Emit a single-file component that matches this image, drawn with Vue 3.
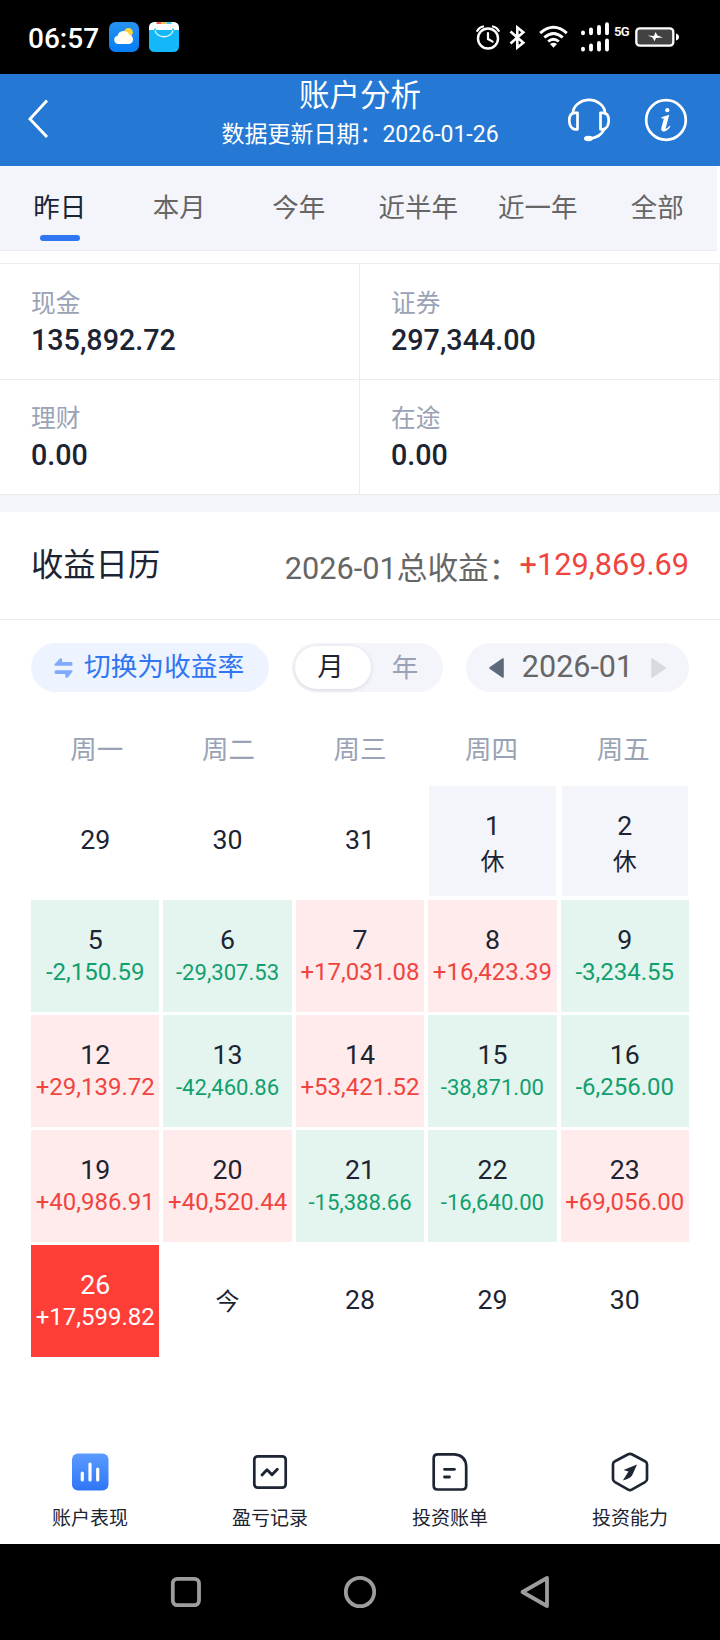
<script setup>
const tabs = ['昨日', '本月', '今年', '近半年', '近一年', '全部']
const assets = [
  { label: '现金', value: '135,892.72' },
  { label: '证券', value: '297,344.00' },
  { label: '理财', value: '0.00' },
  { label: '在途', value: '0.00' },
]
const weekdays = ['周一', '周二', '周三', '周四', '周五']
const days = [
  { d: '29' }, { d: '30' }, { d: '31' },
  { d: '1', v: '休', t: 'rest' }, { d: '2', v: '休', t: 'rest' },
  { d: '5', v: '-2,150.59', t: 'down' },
  { d: '6', v: '-29,307.53', t: 'down', small: true },
  { d: '7', v: '+17,031.08', t: 'up' },
  { d: '8', v: '+16,423.39', t: 'up' },
  { d: '9', v: '-3,234.55', t: 'down' },
  { d: '12', v: '+29,139.72', t: 'up' },
  { d: '13', v: '-42,460.86', t: 'down', small: true },
  { d: '14', v: '+53,421.52', t: 'up' },
  { d: '15', v: '-38,871.00', t: 'down', small: true },
  { d: '16', v: '-6,256.00', t: 'down' },
  { d: '19', v: '+40,986.91', t: 'up' },
  { d: '20', v: '+40,520.44', t: 'up' },
  { d: '21', v: '-15,388.66', t: 'down', small: true },
  { d: '22', v: '-16,640.00', t: 'down', small: true },
  { d: '23', v: '+69,056.00', t: 'up' },
  { d: '26', v: '+17,599.82', t: 'active' },
  { d: '今', t: 'today' }, { d: '28' }, { d: '29' }, { d: '30' },
]
</script>

<template>
  <div class="screen">
    <div class="status">
      <span class="time">06:57</span>
      <svg class="app1" width="30" height="30" viewBox="0 0 30 30">
        <defs>
          <linearGradient id="sky" x1="0" y1="0" x2="0" y2="1">
            <stop offset="0" stop-color="#2793f0" /><stop offset="1" stop-color="#067df5" />
          </linearGradient>
        </defs>
        <rect width="30" height="30" rx="6.5" fill="url(#sky)" />
        <circle cx="19.5" cy="10.3" r="4.3" fill="#fcd535" />
        <path d="M9 22a4.2 4.2 0 0 1-.4-8.300a6.200 6.200 0 0 1 11.700-1A4.800 4.800 0 0 1 20.500 22Z" fill="#fffdf2" />
      </svg>
      <svg class="app2" width="30" height="30" viewBox="0 0 30 30">
        <rect width="30" height="30" rx="5.500" fill="#14b7f8" />
        <path d="M0 8V5.500A5.500 5.500 0 0 1 5.500 0h19A5.500 5.500 0 0 1 30 5.500V8Z" fill="#fff" />
        <path d="M7.500 0h5v2h-5Z" fill="#f05a50" /><path d="M12.500 0h5v2h-5Z" fill="#fbc04d" /><path d="M17.500 0h5v2h-5Z" fill="#40cfe0" />
        <path d="M6 8c1 9 17 9 18 0" fill="none" stroke="#e9fbff" stroke-width="1.300" />
        <circle cx="6" cy="7.500" r="1" fill="#14b7f8" /><circle cx="24" cy="7.500" r="1" fill="#14b7f8" />
      </svg>
      <span class="grow"></span>
      <svg class="alarm" width="24" height="25" viewBox="0 0 24 25" fill="none" stroke="#fff" stroke-linecap="round">
        <circle cx="12" cy="13.500" r="10" stroke-width="2.400" />
        <path d="M12 8v6l4.600 2.600" stroke-width="2.200" /><path d="M1.300 5.800Q3 2.500 7 1.500M22.700 5.800Q21 2.500 17 1.500" stroke-width="2.300" />
      </svg>
      <svg class="bt" width="17" height="25" viewBox="0 0 17 25" fill="none" stroke="#fff" stroke-width="2.600">
        <path d="M1.500 6.500L14.300 17.700L8.300 22.500V2.500L14.300 7.300L1.500 18.500" />
      </svg>
      <svg class="wifi" width="29" height="24" viewBox="0 0 29 24" fill="none" stroke="#fff" stroke-width="2.900">
        <path d="M1.200 8.200Q14.500-3.500 27.800 8.200M5.300 12.500Q14.500 4.300 23.700 12.500M9.200 16.500Q14.500 12 19.800 16.500" />
        <path d="M11 19Q14.500 16.500 18 19L14.500 22.800Z" fill="#fff" stroke="none" />
      </svg>
      <svg class="signal" width="28" height="30" viewBox="0 0 28 30" stroke="#fff" stroke-width="3.900" stroke-linecap="round">
        <path d="M2 10.500v.800M10 7.500v3.800M18 5v6.300M26 2.200v9.100M2 26.700v.800M10 23.500v4M18 21v6.500M26 18.500v9" />
      </svg>
      <span class="fiveg">5G</span>
      <svg class="battery" width="44" height="20" viewBox="0 0 44 20">
        <rect x="1.300" y="1.300" width="37" height="17.400" rx="3.500" fill="#424242" stroke="#fff" stroke-width="2.300" />
        <path d="M41 6.500q3 1 3 3.500t-3 3.500Z" fill="#fff" />
        <path d="M12.500 8.500L19 9L20.500 5L22.500 8.500L28 10.500L21 10.900L19.500 14.300L17.500 10.600Z" fill="#fff" />
      </svg>
    </div>

    <header class="header">
      <svg class="back" width="22" height="40" viewBox="0 0 22 40" fill="none" stroke="#fff" stroke-width="2.900">
        <path d="M20 1.500L3 20L20 38" />
      </svg>
      <div class="heading">
        <div class="title">账户分析</div>
        <div class="subtitle">数据更新日期：2026-01-26</div>
      </div>
      <div class="actions">
        <svg width="44" height="46" viewBox="0 1.500 44 46" fill="none" stroke="#fff" stroke-width="2.700">
          <path d="M6 16.500C6 10 13 3.300 22 3.300S38 10 38 16.500M37.500 32Q34 41 22.500 42" />
          <path d="M10.500 16.300H8Q2.300 16.300 2.300 24T8 32.800h2.500ZM33.500 16.300H36q5.700 0 5.700 7.700T36 32.800H33.500Z" stroke-linejoin="round" />
          <ellipse cx="21.500" cy="42" rx="4.500" ry="2.700" fill="#fff" stroke="none" />
        </svg>
        <svg width="44" height="44" viewBox="0 0 44 44">
          <circle cx="22" cy="22" r="19.800" fill="none" stroke="#fff" stroke-width="2.700" />
          <circle cx="23.300" cy="12.200" r="2.100" fill="#fff" />
          <path d="M17.500 19.200L25.300 16.700L21.500 31Q23 31 25.500 27.800L26.500 28.500Q22.500 34 19 33.500Q16.700 33 17.400 29.800L19.900 20.400H17.500Z" fill="#fff" />
        </svg>
      </div>
    </header>

    <nav class="tabs">
      <div v-for="(t, i) in tabs" :key="t" class="tab" :class="{ on: i === 0 }">{{ t }}</div>
    </nav>

    <section class="assets">
      <div v-for="a in assets" :key="a.label" class="asset">
        <div class="label">{{ a.label }}</div>
        <div class="amount">{{ a.value }}</div>
      </div>
    </section>

    <section class="summary">
      <span class="name">收益日历</span>
      <span class="total">2026-01总收益：</span>
      <span class="gain">+129,869.69</span>
    </section>

    <section class="controls">
      <div class="pill switch">
        <svg width="19" height="22" viewBox="0 0 19 22" fill="#7eabfb">
          <path d="M1.500 8.800Q-.500 8.600 1 6.800L6 1.500Q8 .500 8 2.500V5h9Q18.500 5 18.500 6.900T17 8.800Z" />
          <path d="M17.500 13.200Q19.500 13.400 18 15.200L14 20.300Q11.500 22 11.300 19.500V17H2Q.500 17 .500 15.100T2 13.200Z" />
        </svg>
        <span>切换为收益率</span>
      </div>
      <div class="pill period"><span class="chosen">月</span><span class="other">年</span></div>
      <div class="pill month">
        <svg width="16" height="20" viewBox="0 0 16 20"><path d="M1 10L14 1V19Z" fill="#5f697b" stroke="#5f697b" stroke-width="1.600" stroke-linejoin="round" /></svg>
        <span>2026-01</span>
        <svg width="16" height="20" viewBox="0 0 16 20"><path d="M15 10L2 1V19Z" fill="#d8dade" stroke="#d8dade" stroke-width="1.600" stroke-linejoin="round" /></svg>
      </div>
    </section>

    <div class="week"><span v-for="w in weekdays" :key="w">{{ w }}</span></div>
    <div class="calendar">
      <div v-for="(c, i) in days" :key="i" class="day" :class="c.t">
        <div class="num">{{ c.d }}</div>
        <div v-if="c.v" class="val" :class="{ small: c.small }">{{ c.v }}</div>
      </div>
    </div>

    <footer class="bottom">
      <div class="item">
        <svg width="42" height="42" viewBox="0 0 42 42">
          <defs>
            <linearGradient id="bar" x1="0" y1="0" x2="0" y2="1">
              <stop offset="0" stop-color="#5a9bff" /><stop offset="1" stop-color="#2f76f7" />
            </linearGradient>
          </defs>
          <rect x="3" y="2.500" width="36.500" height="37" rx="6" fill="url(#bar)" />
          <path d="M13.300 22v7M21 13v16M28.700 18v11" stroke="#fff" stroke-width="3.200" stroke-linecap="round" />
        </svg>
        <span>账户表现</span>
      </div>
      <div class="item">
        <svg width="42" height="42" viewBox="0 0 42 42" fill="none" stroke="#1d2533">
          <rect x="5.300" y="5.300" width="31.400" height="31.400" rx="3.500" stroke-width="2.700" />
          <path d="M13 24L18 18.800L23 23.800L28.300 18.300" stroke-width="2.900" stroke-linecap="round" stroke-linejoin="round" />
        </svg>
        <span>盈亏记录</span>
      </div>
      <div class="item">
        <svg width="42" height="42" viewBox="0 0 42 42" fill="none" stroke="#1d2533" stroke-linecap="round">
          <path d="M8.500 3.300H25.500Q37.200 4.500 37.200 16V34.500Q37.200 38.500 33.200 38.500H8.500Q4.700 38.500 4.700 34.500V7.300Q4.700 3.300 8.500 3.300Z" stroke-width="2.700" />
          <path d="M15.500 18.300H25.500M15.500 26H20.500" stroke-width="2.800" />
        </svg>
        <span>投资账单</span>
      </div>
      <div class="item">
        <svg width="42" height="42" viewBox="0 0 42 42">
          <path d="M19.200 3.300Q21 2.300 22.800 3.300L36 10.300Q38 11.300 38 13.300V28Q38 30 36 31.200L22.800 38.600Q21 39.600 19.200 38.600L6 31.200Q4 30 4 28V13.300Q4 11.300 6 10.300Z" fill="none" stroke="#1d2533" stroke-width="2.700" />
          <path d="M28 13.500L14.500 19L19.500 20.500L13.800 29.500Q22.500 27.500 24 22.500Z" fill="#1d2533" />
        </svg>
        <span>投资能力</span>
      </div>
    </footer>

    <div class="sysnav">
      <svg width="32" height="36" viewBox="0 0 32 36"><rect x="2.800" y="4.900" width="26.200" height="26.200" rx="4.500" fill="none" stroke="#9d9d9d" stroke-width="3.800" /></svg>
      <svg width="34" height="36" viewBox="0 0 34 36"><circle cx="16" cy="18" r="14.200" fill="none" stroke="#9d9d9d" stroke-width="3.800" /></svg>
      <svg width="32" height="36" viewBox="0 0 32 36"><path d="M3.500 18L28 4V32Z" fill="none" stroke="#9d9d9d" stroke-width="3.800" stroke-linejoin="round" /></svg>
    </div>
  </div>
</template>

<style>
body { margin: 0; background: #fff; }
</style>

<style scoped>
.screen { width: 720px; height: 1640px; display: flex; flex-direction: column; background: #fff; color: #1c2433; font-family: Roboto, "Noto Sans CJK SC", sans-serif; font-weight: 400; white-space: nowrap; overflow: hidden; }
.screen * { box-sizing: border-box; }
svg { display: block; flex: none; }

.status { height: 74px; background: #000; color: #fff; display: flex; align-items: flex-start; padding: 0 41px 0 28px; flex: none; }
.time { width: 71px; font-size: 28px; font-weight: 500; line-height: 34px; margin-top: 22px; }
.app1 { margin: 22px 0 0 10px; }
.app2 { margin: 22px 0 0 10px; }
.grow { flex: 1; }
.alarm { margin-top: 25px; }
.bt { margin: 25px 0 0 9px; }
.wifi { margin: 25px 0 0 13px; }
.signal { margin: 22px 0 0 13px; }
.fiveg { width: 15px; margin: 25px 0 0 5px; font-size: 13px; line-height: 14px; font-weight: 600; letter-spacing: -.6px; }
.battery { margin: 27px 0 0 6px; }

.header { height: 92px; background: #2578d4; color: #fff; display: grid; grid-template-columns: 200px 320px 200px; flex: none; }
.back { margin: 25px 0 0 27px; }
.heading { text-align: center; }
.title { font-size: 30.500px; line-height: 40px; padding-top: 2px; }
.subtitle { font-size: 23px; line-height: 30px; margin-top: 4px; }
.actions { display: flex; gap: 33px; justify-content: flex-end; padding: 24px 32px 0 0; }

.tabs { height: 85px; width: 717px; background: #f4f5fa; display: grid; grid-template-columns: repeat(6, 119.500px); border-bottom: 1px solid #ebecef; flex: none; }
.tab { display: flex; flex-direction: column; align-items: center; font-size: 26.500px; line-height: 40px; padding-top: 22px; color: #666; }
.tab.on { color: #1c2433; }
.tab.on::after { content: ""; width: 40px; height: 6px; border-radius: 3px; background: #3076f2; margin-top: 7px; }

.assets { margin-top: 12px; border-top: 1px solid #ebecee; display: grid; grid-template-columns: 360px 360px; grid-template-rows: 116px 115px; flex: none; }
.asset { padding: 22px 0 0 31px; border-right: 1px solid #ebecee; border-bottom: 1px solid #ebecee; }
.asset:nth-child(n + 3) { padding-top: 21px; }
.label { font-size: 24.700px; line-height: 36px; color: #9aa3b5; }
.amount { font-size: 28.700px; line-height: 36px; font-weight: 500; }

.summary { height: 125px; border-top: 17px solid #f4f5fa; border-bottom: 1px solid #ebecee; padding: 0 31px; display: flex; align-items: center; flex: none; }
.name { font-size: 32.300px; line-height: 44px; padding-bottom: 2px; }
.total { margin-left: auto; font-size: 30.700px; line-height: 44px; color: #666; padding-top: 6px; }
.gain { font-size: 30.700px; line-height: 44px; color: #ee4540; padding-bottom: 2px; }

.controls { display: flex; justify-content: space-between; padding: 23px 31px 0; flex: none; }
.pill { height: 49px; border-radius: 25px; background: #f4f5fa; display: flex; align-items: center; font-size: 26.500px; }
.switch { width: 238px; background: #edf3ff; color: #3076f2; padding-left: 23px; gap: 11px; font-size: 26.700px; }
.switch span { line-height: 40px; padding-bottom: 1px; }
.period { width: 151px; padding: 3px; }
.chosen { width: 76px; height: 43px; line-height: 41px; border-radius: 22px; background: #fff; text-align: center; box-shadow: 0 1px 4px rgba(40, 50, 70, .14); padding-right: 5px; }
.other { flex: 1; text-align: center; color: #9aa3b5; line-height: 41px; padding-right: 1px; }
.month { width: 223px; justify-content: space-between; padding: 0 23px; font-size: 30.500px; color: #666; }
.month span { line-height: 40px; padding-bottom: 2px; }

.week { display: grid; grid-template-columns: repeat(5, 1fr); margin: 38px 31px 0; text-align: center; font-size: 26.500px; line-height: 40px; color: #9aa3b5; flex: none; }
.calendar { margin: 15px 31px 0; display: grid; grid-template-columns: repeat(5, 1fr); grid-auto-rows: 111.500px; gap: 3.500px 4px; flex: none; }
.day { display: flex; flex-direction: column; align-items: center; justify-content: center; padding-bottom: 2px; }
.num { font-size: 26.700px; line-height: 34px; }
.val { font-size: 24px; line-height: 30px; }
.val.small { font-size: 22.100px; }
.rest { background: #f4f5fa; border: 1px solid #fff; padding: 9px 0 0; }
.rest .val { line-height: 38px; }
.up { background: #ffebeb; }
.up .val { color: #f0453f; }
.down { background: #e4f5ef; }
.down .val { color: #129f6e; }
.active { background: #ff3e37; color: #fff; }
.today { padding: 2px 0 0; }
.today .num { font-size: 24px; }

.bottom { margin-top: auto; height: 94px; display: grid; grid-template-columns: repeat(4, 180px); flex: none; }
.item { display: flex; flex-direction: column; align-items: center; font-size: 19px; line-height: 28px; }
.item svg { margin: 1px 0 12px; }
.sysnav { height: 96px; background: #000; display: flex; justify-content: space-between; padding: 30px 169px 0 170px; flex: none; }
</style>
